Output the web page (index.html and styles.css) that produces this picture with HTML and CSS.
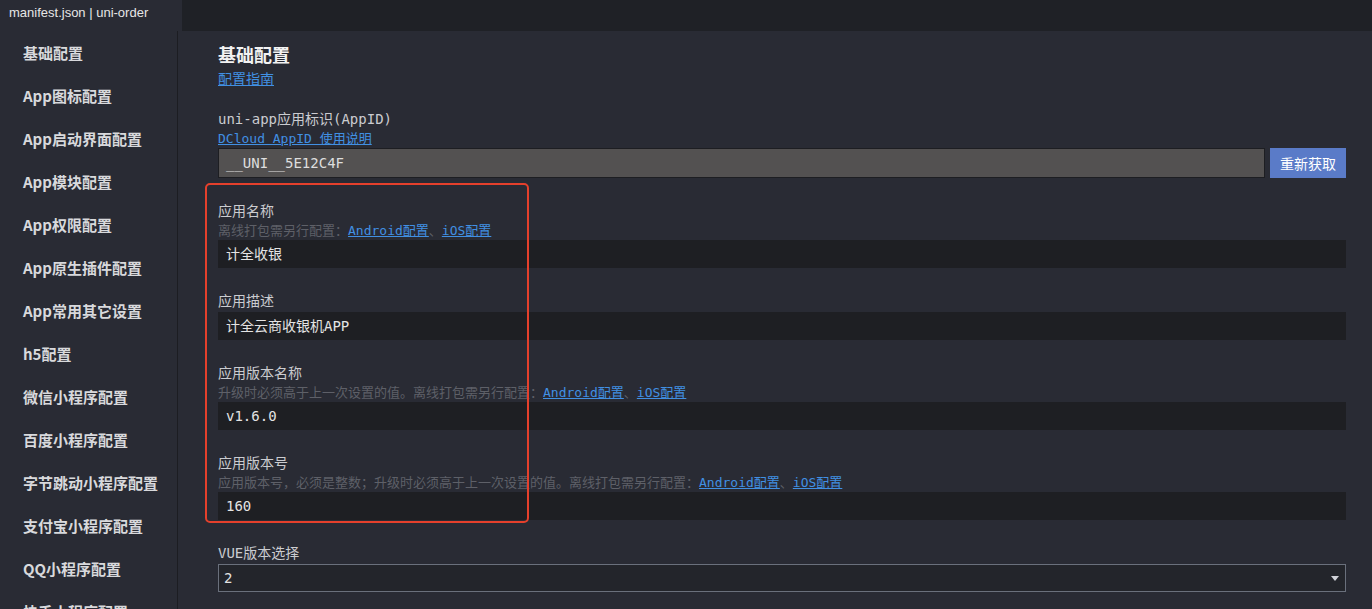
FILE: index.html
```html
<!DOCTYPE html>
<html lang="zh-CN">
	<head>
		<meta charset="utf-8" />
		<title>manifest.json | uni-order</title>
		<link rel="stylesheet" href="styles.css">
	</head>
	<body>
		<header class="tabs">
			<div class="tab">manifest.json | uni-order</div>
		</header>
		<div class="layout">
			<nav class="sidebar">
				<div class="nav-item">基础配置</div>
				<div class="nav-item">App图标配置</div>
				<div class="nav-item">App启动界面配置</div>
				<div class="nav-item">App模块配置</div>
				<div class="nav-item">App权限配置</div>
				<div class="nav-item">App原生插件配置</div>
				<div class="nav-item">App常用其它设置</div>
				<div class="nav-item">h5配置</div>
				<div class="nav-item">微信小程序配置</div>
				<div class="nav-item">百度小程序配置</div>
				<div class="nav-item">字节跳动小程序配置</div>
				<div class="nav-item">支付宝小程序配置</div>
				<div class="nav-item">QQ小程序配置</div>
				<div class="nav-item">快手小程序配置</div>
			</nav>
			<main class="content">
				<h1 class="title">基础配置</h1>
				<a class="guide" href="#">配置指南</a>

				<div class="field field-appid">
					<div class="label">uni-app应用标识(AppID)</div>
					<div class="hint"><a href="#">DCloud AppID 使用说明</a></div>
					<div class="appid-row">
						<div class="appid-input">__UNI__5E12C4F</div>
						<button class="btn">重新获取</button>
					</div>
				</div>

				<div class="field">
					<div class="label">应用名称</div>
					<div class="hint">离线打包需另行配置：<a href="#">Android配置</a>、<a href="#">iOS配置</a></div>
					<div class="input">计全收银</div>
				</div>

				<div class="field">
					<div class="label">应用描述</div>
					<div class="input">计全云商收银机APP</div>
				</div>

				<div class="field">
					<div class="label">应用版本名称</div>
					<div class="hint">升级时必须高于上一次设置的值。离线打包需另行配置：<a href="#">Android配置</a>、<a href="#">iOS配置</a></div>
					<div class="input">v1.6.0</div>
				</div>

				<div class="field">
					<div class="label">应用版本号</div>
					<div class="hint">应用版本号，必须是整数；升级时必须高于上一次设置的值。离线打包需另行配置：<a href="#">Android配置</a>、<a href="#">iOS配置</a></div>
					<div class="input">160</div>
				</div>

				<div class="field">
					<div class="label">VUE版本选择</div>
					<div class="select">
						<span>2</span>
						<span class="caret"></span>
					</div>
				</div>

				<div class="highlight"></div>
			</main>
		</div>
	</body>
</html>
```

FILE: styles.css
```css
html,
body {
	height: 100%;
}

body {
	background: #292b34;
	color: #dcdcdc;
	font-family: "Noto Sans CJK SC", "Noto Sans", sans-serif;
	margin: 0;
	overflow: hidden;
}

a {
	color: #4190e3;
	text-decoration: underline;
}

.tabs {
	background: #1f2126;
	display: flex;
	height: 31px;
}

.tab {
	background: #292b34;
	color: #e6e6e6;
	font-family: "Liberation Sans", "Noto Sans", sans-serif;
	font-size: 13px;
	line-height: 25px;
	padding: 0 9px;
	width: 164px;
}

.layout {
	display: flex;
}

.sidebar {
	border-right: 1px solid #1c1d22;
	flex: 0 0 177px;
	min-height: 600px;
}

.nav-item {
	color: #d8d9dc;
	font-size: 15px;
	font-weight: bold;
	height: 43px;
	line-height: 43px;
	padding-left: 23px;
	white-space: nowrap;
}

.content {
	flex: 1;
	font-family: "DejaVu Sans Mono", "Liberation Mono", "Noto Sans CJK SC", monospace;
	padding: 12px 26px 0 40px;
	position: relative;
}

.title {
	color: #f2f2f2;
	font-family: "Noto Sans CJK SC", sans-serif;
	font-size: 18px;
	font-weight: bold;
	line-height: 22px;
	margin: 0;
}

.guide {
	display: inline-block;
	font-family: "Noto Sans CJK SC", sans-serif;
	font-size: 14px;
	line-height: 18px;
	margin-top: 4px;
}

.field {
	margin-top: 24px;
}

.field-appid {
	margin-top: 22px;
}

.label {
	color: #cbccd0;
	font-size: 14px;
	line-height: 18px;
}

.hint {
	color: #5e6068;
	font-size: 13px;
	line-height: 16px;
	margin-top: 3px;
	white-space: nowrap;
}

.input {
	background: #1e1f23;
	color: #e4e4e4;
	font-size: 14px;
	height: 28px;
	line-height: 28px;
	margin-top: 2px;
	padding-left: 8px;
}

.hint + .input {
	margin-top: 1px;
}

.appid-row {
	display: flex;
	gap: 5px;
	margin-top: 1px;
}

.appid-input {
	background: #535151;
	border: 1px solid #1d1e22;
	color: #dedede;
	flex: 1;
	font-size: 14px;
	height: 28px;
	line-height: 28px;
	padding-left: 7px;
}

.btn {
	background: #5a7bc8;
	border: 0;
	color: #ffffff;
	font-family: "Noto Sans CJK SC", sans-serif;
	font-size: 14px;
	height: 30px;
	padding: 0;
	width: 76px;
}

.select {
	align-items: center;
	background: #23252b;
	border: 1px solid #6a707c;
	color: #e2e2e2;
	display: flex;
	font-size: 14px;
	height: 26px;
	justify-content: space-between;
	margin-top: 2px;
	padding: 0 5px;
}

.caret {
	border-left: 4px solid transparent;
	border-right: 4px solid transparent;
	border-top: 5px solid #d0d2d8;
	height: 0;
	margin-right: 1px;
	width: 0;
}

.highlight {
	border: 2px solid #e5402c;
	border-radius: 5px;
	height: 336px;
	left: 27px;
	position: absolute;
	top: 152px;
	width: 320px;
}
```
